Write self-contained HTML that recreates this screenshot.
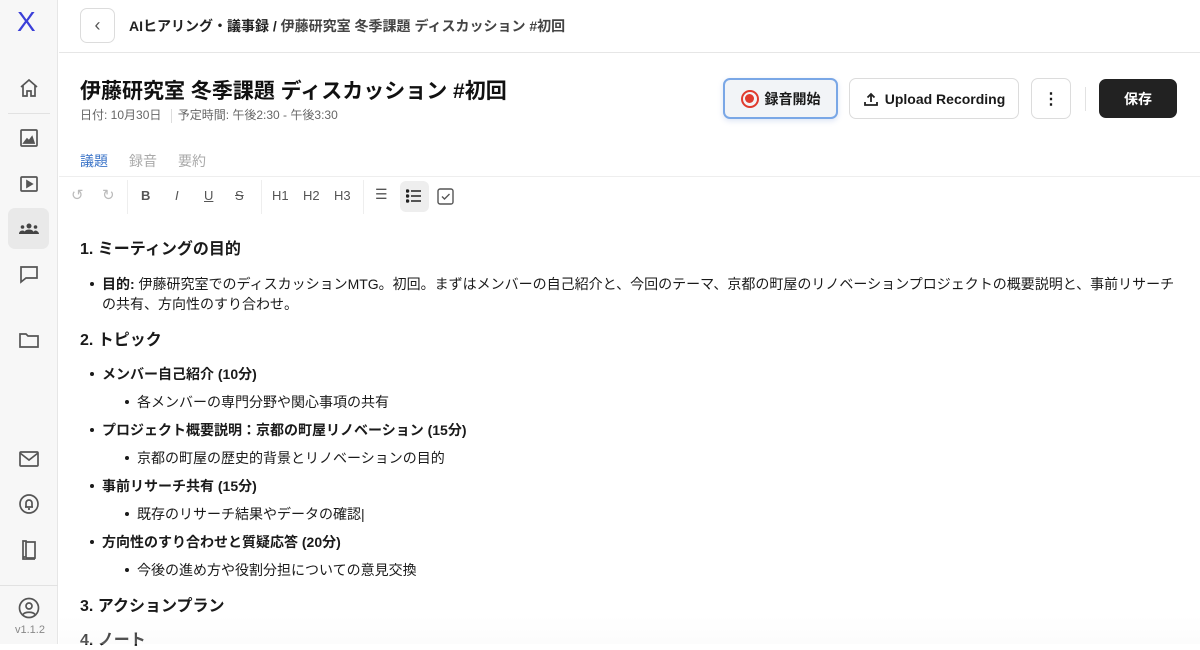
<!DOCTYPE html>
<html><head><meta charset="utf-8"><style>
*{margin:0;padding:0;box-sizing:border-box}
body{width:1200px;height:644px;overflow:hidden;background:#fff;font-family:"Liberation Sans","Noto Sans CJK JP",sans-serif;color:#1a1a1a;position:relative}
.a{position:absolute;white-space:nowrap}
.side{position:absolute;left:0;top:0;width:58px;height:644px;background:#f7f7f7;border-right:1px solid #e6e6e6}
.ic{position:absolute;left:17px;width:24px;height:24px}
svg{display:block}
.btn{position:absolute;border:1px solid #dcdcdc;border-radius:7px;background:#fff;display:flex;align-items:center;justify-content:center;font-size:14px;font-weight:600}
.tb{position:absolute;top:188px;font-size:13px;color:#555}
.h{font-size:16px;font-weight:700}
.t{font-size:14px}
.dot{position:absolute;width:4px;height:4px;border-radius:50%;background:#1a1a1a}
</style></head><body>
<div class="side">
 <div class="a" style="left:17px;top:6px;font-size:28px;color:#3b3fd8;font-weight:300">X</div>
 <div style="position:absolute;left:8px;top:113px;width:42px;height:1px;background:#e2e2e2"></div>
 <div style="position:absolute;left:0;top:585px;width:58px;height:1px;background:#e2e2e2"></div>
 <svg class="ic" style="top:76px" viewBox="0 0 24 24" fill="none" stroke="#555" stroke-width="1.7"><path d="M4 11l8-7 8 7M6 9.5V20h4v-5h4v5h4V9.5"/></svg>
 <svg class="ic" style="top:126px" viewBox="0 0 24 24" fill="none" stroke="#555" stroke-width="1.7"><rect x="4" y="4" width="16" height="16" rx="1"/><path d="M7 17l3-4 2 2 3-4 2 6z" fill="#555"/></svg>
 <svg class="ic" style="top:172px" viewBox="0 0 24 24" fill="none" stroke="#555" stroke-width="1.7"><rect x="4" y="5" width="16" height="14" rx="1"/><path d="M10 9v6l5-3z" fill="#555"/></svg>
 <div style="position:absolute;left:8px;top:208px;width:41px;height:41px;border-radius:7px;background:#e9e9e9"></div>
 <svg class="ic" style="top:217px" viewBox="0 0 24 24" fill="#444"><circle cx="12" cy="9" r="2.5"/><path d="M7 17c0-3 2-4.5 5-4.5s5 1.5 5 4.5z"/><circle cx="5.5" cy="10" r="1.8"/><circle cx="18.5" cy="10" r="1.8"/><path d="M2 17c0-2 1.3-3.5 3.5-3.5S8 15 8 17zM16 17c0-2 1.3-3.5 2.5-3.5S22 15 22 17z"/></svg>
 <svg class="ic" style="top:262px" viewBox="0 0 24 24" fill="none" stroke="#555" stroke-width="1.7"><path d="M4 5h16v11H9l-5 4z"/></svg>
 <svg class="ic" style="top:328px" viewBox="0 0 24 24" fill="none" stroke="#555" stroke-width="1.7"><path d="M3 6h6l2 2h10v11H3z"/></svg>
 <svg class="ic" style="top:447px" viewBox="0 0 24 24" fill="none" stroke="#555" stroke-width="1.7"><rect x="3" y="5" width="18" height="14" rx="1"/><path d="M3 6l9 7 9-7"/></svg>
 <svg class="ic" style="top:492px" viewBox="0 0 24 24" fill="none" stroke="#555" stroke-width="1.7"><circle cx="12" cy="12" r="9"/><path d="M8 15h8M9 15v-4a3 3 0 016 0v4M11 17h2"/></svg>
 <svg class="ic" style="top:538px" viewBox="0 0 24 24" fill="none" stroke="#555" stroke-width="1.7"><path d="M6 3h3v16H6zM9 4h9v16H9M6 19v2h12"/></svg>
 <svg class="ic" style="top:596px" viewBox="0 0 24 24" fill="none" stroke="#555" stroke-width="1.7"><circle cx="12" cy="12" r="9.5"/><circle cx="12" cy="10" r="3"/><path d="M6 18.5c2-3 10-3 12 0"/></svg>
 <div class="a" style="left:15px;top:624px;font-size:11px;color:#888">v1.1.2</div>
</div>
<div style="position:absolute;left:59px;top:52px;width:1141px;height:1px;background:#e6e6e6"></div>
<div class="btn" style="left:80px;top:8px;width:35px;height:35px;font-weight:400;color:#555;font-size:18px">‹</div>
<div class="a" style="left:129px;top:16px;font-size:14px;font-weight:700;color:#222">AIヒアリング・議事録 / <span style="color:#444">伊藤研究室 冬季課題 ディスカッション #初回</span></div>
<div class="a" style="left:80px;top:75px;font-size:21px;font-weight:700;color:#111">伊藤研究室 冬季課題 ディスカッション #初回</div>
<div class="a" style="left:80px;top:106px;font-size:12px;color:#666">日付: 10月30日 <span style="display:inline-block;width:1px;height:14px;background:#ddd;vertical-align:middle;margin:0 6px"></span>予定時間: 午後2:30 - 午後3:30</div>
<div class="btn" style="left:723px;top:78px;width:115px;height:41px;border:2px solid #7aa7e6;background:#f2f4f7;box-shadow:0 2px 6px rgba(80,120,200,.2)"><span style="width:18px;height:18px;border:2px solid #e03b2e;border-radius:50%;display:inline-flex;align-items:center;justify-content:center;margin-right:6px"><span style="width:9px;height:9px;border-radius:50%;background:#e03b2e"></span></span>録音開始</div>
<div class="btn" style="left:849px;top:78px;width:170px;height:41px"><svg width="16" height="16" viewBox="0 0 16 16" fill="none" stroke="#222" stroke-width="1.8" style="margin-right:6px"><path d="M8 11V3M4.5 6.5L8 3l3.5 3.5M2 11v3h12v-3"/></svg>Upload Recording</div>
<div class="btn" style="left:1031px;top:78px;width:40px;height:41px;font-size:16px">⋮</div>
<div style="position:absolute;left:1085px;top:87px;width:1px;height:24px;background:#e2e2e2"></div>
<div class="btn" style="left:1099px;top:79px;width:78px;height:39px;background:#222;border-color:#222;color:#fff">保存</div>
<div class="a" style="left:80px;top:151px;font-size:14px;color:#3b74c8">議題</div>
<div class="a" style="left:129px;top:151px;font-size:14px;color:#aaa">録音</div>
<div class="a" style="left:178px;top:151px;font-size:14px;color:#aaa">要約</div>
<div style="position:absolute;left:59px;top:176px;width:1141px;height:1px;background:#eee"></div>
<div class="tb" style="left:71px;color:#bbb;font-size:15px;top:186px">↺</div>
<div class="tb" style="left:102px;color:#bbb;font-size:15px;top:186px">↻</div>
<div style="position:absolute;left:127px;top:180px;width:1px;height:34px;background:#eee"></div>
<div class="tb" style="left:141px;font-weight:700">B</div>
<div class="tb" style="left:175px;font-style:italic">I</div>
<div class="tb" style="left:204px;text-decoration:underline">U</div>
<div class="tb" style="left:235px;text-decoration:line-through">S</div>
<div style="position:absolute;left:261px;top:180px;width:1px;height:34px;background:#eee"></div>
<div class="tb" style="left:272px">H1</div>
<div class="tb" style="left:303px">H2</div>
<div class="tb" style="left:334px">H3</div>
<div style="position:absolute;left:363px;top:180px;width:1px;height:34px;background:#eee"></div>
<div class="tb" style="left:375px;font-size:14px;top:186px">☰</div>
<div style="position:absolute;left:400px;top:181px;width:29px;height:31px;border-radius:6px;background:#eeeeee"></div>
<svg style="position:absolute;left:406px;top:189px" width="16" height="14" viewBox="0 0 16 14" stroke="#222" stroke-width="1.6"><path d="M5 2h10M5 7h10M5 12h10"/><circle cx="1.5" cy="2" r="1" fill="#222"/><circle cx="1.5" cy="7" r="1" fill="#222"/><circle cx="1.5" cy="12" r="1" fill="#222"/></svg>
<svg style="position:absolute;left:437px;top:188px" width="17" height="17" viewBox="0 0 17 17" fill="none" stroke="#555" stroke-width="1.4"><rect x="1" y="1" width="15" height="15" rx="2"/><path d="M5 8.5l2.5 2.5 5-5"/></svg>
<div class="a h" style="left:80px;top:235px">1. ミーティングの目的</div>
<div class="dot" style="left:90px;top:282px"></div>
<div class="a t" style="left:102px;top:274px"><b>目的:</b> 伊藤研究室でのディスカッションMTG。初回。まずはメンバーの自己紹介と、今回のテーマ、京都の町屋のリノベーションプロジェクトの概要説明と、事前リサーチ</div>
<div class="a t" style="left:102px;top:294px">の共有、方向性のすり合わせ。</div>
<div class="a h" style="left:80px;top:326px">2. トピック</div>
<div class="dot" style="left:90px;top:372px"></div><div class="a t" style="left:102px;top:364px;font-weight:700">メンバー自己紹介 (10分)</div>
<div class="dot" style="left:125px;top:400px"></div><div class="a t" style="left:137px;top:392px">各メンバーの専門分野や関心事項の共有</div>
<div class="dot" style="left:90px;top:428px"></div><div class="a t" style="left:102px;top:420px;font-weight:700">プロジェクト概要説明：京都の町屋リノベーション (15分)</div>
<div class="dot" style="left:125px;top:456px"></div><div class="a t" style="left:137px;top:448px">京都の町屋の歴史的背景とリノベーションの目的</div>
<div class="dot" style="left:90px;top:484px"></div><div class="a t" style="left:102px;top:476px;font-weight:700">事前リサーチ共有 (15分)</div>
<div class="dot" style="left:125px;top:512px"></div><div class="a t" style="left:137px;top:504px">既存のリサーチ結果やデータの確認|</div>
<div class="dot" style="left:90px;top:540px"></div><div class="a t" style="left:102px;top:532px;font-weight:700">方向性のすり合わせと質疑応答 (20分)</div>
<div class="dot" style="left:125px;top:568px"></div><div class="a t" style="left:137px;top:560px">今後の進め方や役割分担についての意見交換</div>
<div class="a h" style="left:80px;top:592px">3. アクションプラン</div>
<div class="a h" style="left:80px;top:626px">4. ノート</div>
<div style="position:absolute;left:59px;top:615px;width:1141px;height:29px;background:linear-gradient(rgba(255,255,255,0),rgba(245,245,245,.3))"></div>
</body></html>
